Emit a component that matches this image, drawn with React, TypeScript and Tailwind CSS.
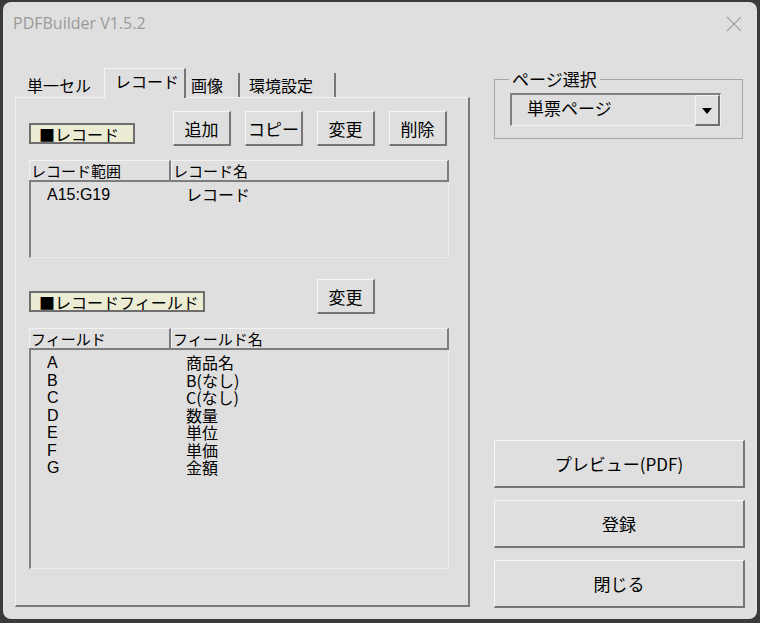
import React from 'react';

const jp = { fontFamily: '"Noto Sans CJK JP", "Noto Sans", sans-serif' };
const latin = { fontFamily: '"Liberation Sans", Arial, sans-serif' };

const SmallButton: React.FC<{ label: string }> = ({ label }) => (
  <div className="w-[58px] h-[35px] flex items-center justify-center text-[17px] leading-none text-black bg-[#dfdfdf] border-t border-l border-t-[#f7f7f7] border-l-[#f7f7f7] border-r-2 border-b-2 border-r-[#757575] border-b-[#757575]">
    {label}
  </div>
);

const BigButton: React.FC<{ label: string }> = ({ label }) => (
  <div className="w-[251px] h-[48px] flex items-center justify-center text-[17px] leading-none text-black bg-[#dfdfdf] border-t border-l border-t-[#f7f7f7] border-l-[#f7f7f7] border-r-2 border-b-2 border-r-[#757575] border-b-[#757575]">
    {label}
  </div>
);

const SectionLabel: React.FC<{ label: string; width: string }> = ({ label, width }) => (
  <div
    className={`${width} h-[21px] mt-[12px] flex items-center pl-[8px] text-[16px] leading-none text-black bg-[#ecebd4] border-2 border-[#6e6e6e]`}
  >
    {label}
  </div>
);

const ListHeader: React.FC<{ first: string; second: string }> = ({ first, second }) => (
  <div className="w-[420px] h-[22px] flex text-[15px] leading-none text-black border-b-2 border-b-[#7d7d7d]">
    <div className="w-[142px] flex items-center pl-[1px] border-t border-l border-[#f2f2f2] border-r-2 border-r-[#7d7d7d]">
      {first}
    </div>
    <div className="flex-1 flex items-center pl-[1px] border-t border-l border-[#f2f2f2] border-r-2 border-r-[#7d7d7d]">
      {second}
    </div>
  </div>
);

const ListBox: React.FC<{ height: string; rows: [string, string][] }> = ({ height, rows }) => (
  <div className={`w-[420px] ${height} pl-[16px] pt-[4px] border-l-2 border-l-[#808080] border-r border-b border-r-[#ececec] border-b-[#ececec] leading-[17.5px] text-black`}>
    {rows.map(([a, b]) => (
      <div key={a} className="flex items-center h-[17.5px]">
        <span className="w-[139px] text-[16px]" style={latin}>{a}</span>
        <span className="text-[16px]">{b}</span>
      </div>
    ))}
  </div>
);

const fields: [string, string][] = [
  ['A', '商品名'],
  ['B', 'B(なし)'],
  ['C', 'C(なし)'],
  ['D', '数量'],
  ['E', '単位'],
  ['F', '単価'],
  ['G', '金額'],
];

export default function App() {
  return (
    <div className="w-[760px] h-[623px] bg-[#3a3a3a] pt-[2px] px-[3px] pb-[4px] overflow-hidden" style={jp}>
      <div className="h-full rounded-[8px] bg-[#dfdfdf] flex flex-col">
        {/* title bar */}
        <div className="h-[42px] flex items-center justify-between pl-[10px] pr-[15px]">
          <span className="text-[16px] text-[#9a9a9a]" style={{ fontFamily: '"Open Sans", "Noto Sans", sans-serif' }}>
            PDFBuilder V1.5.2
          </span>
          <svg width="16" height="16" viewBox="0 0 16 16" className="mt-[1px]">
            <path d="M1 1 L15 15 M15 1 L1 15" stroke="#a3a3a3" strokeWidth="1.2" />
          </svg>
        </div>

        <div className="flex pl-[12px]">
          {/* left: tab control */}
          <div className="w-[455px] mt-[24px] flex flex-col">
            <div className="h-[29px] flex items-end pl-[3px] text-[16px] leading-none text-black">
              <div className="w-[86px] h-[25px] flex items-center pl-[9px]">単一セル</div>
              <div className="relative z-10 w-[82px] h-[30px] -mb-[1px] pl-[10px] pt-[4px] bg-[#dfdfdf] border-t border-l border-[#f4f4f4] border-r-2 border-r-[#767676]">
                レコード
              </div>
              <div className="w-[54px] h-[24px] flex items-center pl-[5px] border-r-2 border-r-[#767676]">画像</div>
              <div className="w-[96px] h-[24px] flex items-center pl-[9px] border-r-2 border-r-[#767676]">環境設定</div>
            </div>

            <div className="h-[510px] pl-[13px] pt-[13px] border-t border-l border-[#f2f2f2] border-r-2 border-b-2 border-r-[#7a7a7a] border-b-[#7a7a7a] flex flex-col">
              <div className="flex h-[35px]">
                <SectionLabel label="■レコード" width="w-[106px]" />
                <div className="ml-[38px] flex gap-[14px]">
                  <SmallButton label="追加" />
                  <SmallButton label="コピー" />
                  <SmallButton label="変更" />
                  <SmallButton label="削除" />
                </div>
              </div>

              <div className="mt-[14px]">
                <ListHeader first="レコード範囲" second="レコード名" />
              </div>
              <ListBox height="h-[76px]" rows={[['A15:G19', 'レコード']]} />

              <div className="flex h-[35px] mt-[21px]">
                <SectionLabel label="■レコードフィールド" width="w-[176px]" />
                <div className="ml-[112px]">
                  <SmallButton label="変更" />
                </div>
              </div>

              <div className="mt-[14px]">
                <ListHeader first="フィールド" second="フィールド名" />
              </div>
              <ListBox height="h-[219px]" rows={fields} />
            </div>
          </div>

          {/* right column */}
          <div className="ml-[24px] w-[251px] mt-[26px] flex flex-col">
            <fieldset className="w-[249px] border border-[#a6a6a6] px-[15px] pb-[12px]">
              <legend className="-ml-[1px] px-[3px] text-[17px] leading-[18px] text-black">ページ選択</legend>
              <div className="mt-[5px] w-[211px] h-[33px] flex border-t-2 border-l-2 border-[#808080] border-r border-b border-r-[#f0f0f0] border-b-[#f0f0f0]">
                <div className="flex-1 pl-[15px] pt-[3px] text-[17px] leading-[20px] text-black">単票ページ</div>
                <div className="w-[25px] h-[31px] flex items-center justify-center pt-[2px] border-t border-l border-[#f4f4f4] border-r-2 border-b-2 border-r-[#707070] border-b-[#707070]">
                  <svg width="10" height="6" viewBox="0 0 10 6">
                    <path d="M0 0 L10 0 L5 6 Z" fill="#000" />
                  </svg>
                </div>
              </div>
            </fieldset>

            <div className="mt-[301px] flex flex-col gap-[12px]">
              <BigButton label="プレビュー(PDF)" />
              <BigButton label="登録" />
              <BigButton label="閉じる" />
            </div>
          </div>
        </div>
      </div>
    </div>
  );
}
